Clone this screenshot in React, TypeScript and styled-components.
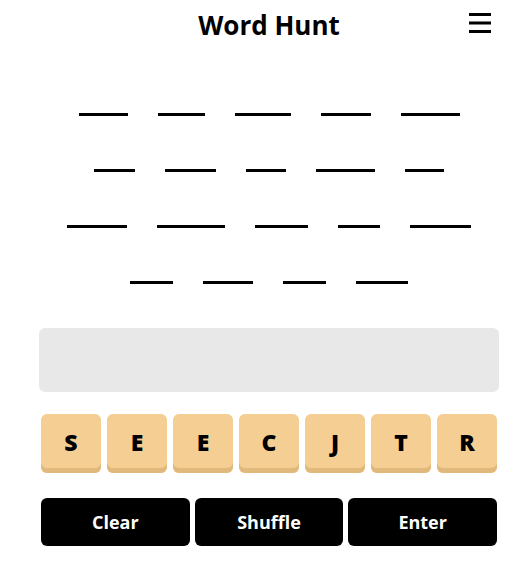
import React from "react";
import styled, { createGlobalStyle } from "styled-components";

const words: number[][] = [
  [49, 47, 56, 50, 59],
  [41, 51, 40, 59, 39],
  [60, 68, 53, 42, 61],
  [43, 50, 43, 52],
];

const letters = ["S", "E", "E", "C", "J", "T", "R"];

function App() {
  return (
    <>
      <GlobalStyle />
      <Wrap>
        <Header>
          <Title>Word Hunt</Title>
          <MenuButton aria-label="menu">
            <svg width="22" height="20" viewBox="0 0 22 20">
              <rect x="0" y="0" width="22" height="3" fill="#000" />
              <rect x="0" y="8.5" width="22" height="3" fill="#000" />
              <rect x="0" y="17" width="22" height="3" fill="#000" />
            </svg>
          </MenuButton>
        </Header>

        <Board>
          {words.map((row, i) => (
            <WordRow key={i}>
              {row.map((w, j) => (
                <Blank key={j} style={{ width: w }} />
              ))}
            </WordRow>
          ))}
        </Board>

        <Guess />

        <Tiles>
          {letters.map((l, i) => (
            <Tile key={i}>{l}</Tile>
          ))}
        </Tiles>

        <Actions>
          <ActionButton>Clear</ActionButton>
          <ActionButton>Shuffle</ActionButton>
          <ActionButton>Enter</ActionButton>
        </Actions>
      </Wrap>
    </>
  );
}

export default App;

const GlobalStyle = createGlobalStyle`
  body {
    margin: 0;
    background: #fff;
    font-family: "Open Sans", "Liberation Sans", sans-serif;
    color: #000;
  }
`;
const Wrap = styled.div`
  width: 460px;
  margin-left: 39px;
`;
const Header = styled.header`
  position: relative;
  height: 50px;
  display: flex;
  align-items: center;
  justify-content: center;
`;
const Title = styled.h1`
  margin: 0;
  font-size: 26px;
  font-weight: 700;
`;
const MenuButton = styled.button`
  position: absolute;
  right: 8px;
  top: 13px;
  display: flex;
  border: none;
  background: none;
  padding: 0;
`;
const Board = styled.div`
  margin-top: 36px;
  display: flex;
  flex-direction: column;
`;
const WordRow = styled.div`
  height: 56px;
  display: flex;
  align-items: center;
  justify-content: center;
  gap: 30px;
`;
const Blank = styled.div`
  height: 3px;
  background: #000;
`;
const Guess = styled.div`
  margin-top: 18px;
  height: 64px;
  background: #e8e8e8;
  border-radius: 6px;
`;
const Tiles = styled.div`
  margin: 22px 2px 0;
  display: grid;
  grid-template-columns: repeat(7, 1fr);
  gap: 6px;
`;
const Tile = styled.div`
  height: 59px;
  box-sizing: border-box;
  padding-bottom: 3px;
  border-radius: 6px;
  background: #f5ce93;
  box-shadow: inset 0 -5px 0 #e2b97d;
  display: flex;
  align-items: center;
  justify-content: center;
  font-size: 23px;
  font-weight: 800;
`;
const Actions = styled.div`
  margin: 25px 2px 0;
  display: grid;
  grid-template-columns: repeat(3, 1fr);
  gap: 5px;
`;
const ActionButton = styled.button`
  height: 48px;
  border: none;
  border-radius: 6px;
  background: #000;
  color: #fff;
  font-family: "Open Sans", "Liberation Sans", sans-serif;
  font-size: 18px;
  font-weight: 700;
`;
